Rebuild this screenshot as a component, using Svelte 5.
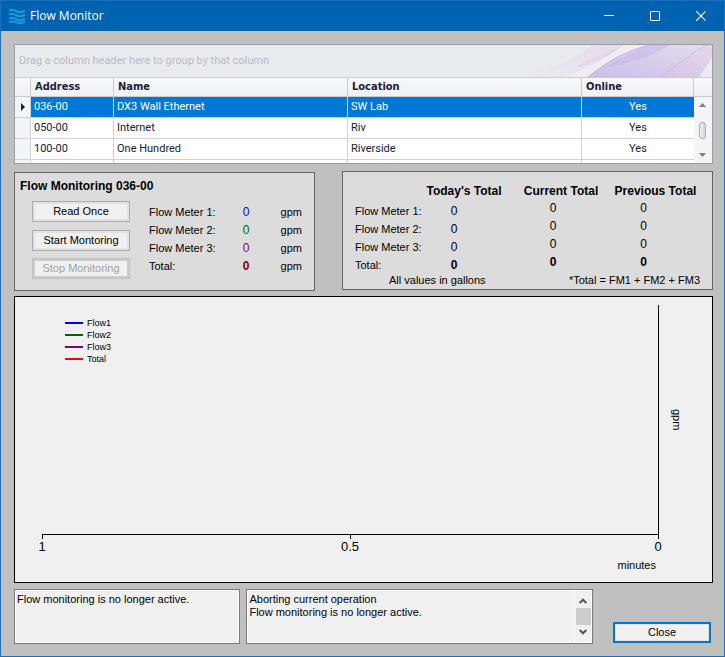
<script>
  const devices = [
    { address: '036-00', name: 'DX3 Wall Ethernet', location: 'SW Lab', online: 'Yes' },
    { address: '050-00', name: 'Internet', location: 'Riv', online: 'Yes' },
    { address: '100-00', name: 'One Hundred', location: 'Riverside', online: 'Yes' }
  ];
  let selected = $state(0);

  const meters = [
    { label: 'Flow Meter 1:', value: 0, tone: 'blue' },
    { label: 'Flow Meter 2:', value: 0, tone: 'green' },
    { label: 'Flow Meter 3:', value: 0, tone: 'plum' },
    { label: 'Total:', value: 0, tone: 'total' }
  ];
  const totals = [
    { label: 'Flow Meter 1:', today: 0, current: 0, previous: 0 },
    { label: 'Flow Meter 2:', today: 0, current: 0, previous: 0 },
    { label: 'Flow Meter 3:', today: 0, current: 0, previous: 0 },
    { label: 'Total:', today: 0, current: 0, previous: 0 }
  ];
  const series = [
    { name: 'Flow1', tone: 's1' },
    { name: 'Flow2', tone: 's2' },
    { name: 'Flow3', tone: 's3' },
    { name: 'Total', tone: 's4' }
  ];
  const status = 'Flow monitoring is no longer active.';
  const log = 'Aborting current operation\nFlow monitoring is no longer active.';
</script>

<div class="window">
  <header class="titlebar">
    <svg class="logo" width="16" height="15" viewBox="0 0 16 15" aria-hidden="true">
      <g fill="none" stroke="#1b9bdc" stroke-width="2">
        <path d="M0 1.5C3 .5 5 1 8 2.500S13 3.500 16 1.500" />
        <path d="M0 5.500C3 4.500 5 5 8 6.500S13 7.500 16 5.500" />
        <path d="M0 9.500C3 8.500 5 9 8 10.500S13 11.500 16 9.500" />
        <path d="M0 13C3 12 5 12.500 8 13.500S13 14.500 16 12.500" />
      </g>
    </svg>
    <h1>Flow Monitor</h1>
    <button class="ctl" aria-label="Minimize">
      <svg width="10" height="10" viewBox="0 0 10 10"><path d="M0 4.500H10" stroke="#fff" /></svg>
    </button>
    <button class="ctl" aria-label="Maximize">
      <svg width="10" height="10" viewBox="0 0 10 10"><path d="M.5 .5H9.500V9.500H.5Z" fill="none" stroke="#fff" /></svg>
    </button>
    <button class="ctl" aria-label="Close window">
      <svg width="10" height="10" viewBox="0 0 10 10"><path d="M0 0L10 10M10 0L0 10" stroke="#fff" stroke-width="1.200" /></svg>
    </button>
  </header>

  <main>
    <section class="grid">
      <div class="groupbar">
        <span>Drag a column header here to group by that column</span>
        <svg class="swirl" width="200" height="32" viewBox="0 0 200 32" aria-hidden="true">
          <defs>
            <linearGradient id="pink" x1="0" x2="1" y1="1" y2="0">
              <stop offset="0" stop-color="#e9eaee" />
              <stop offset=".5" stop-color="#e8deec" />
              <stop offset="1" stop-color="#e6d3ea" />
            </linearGradient>
            <linearGradient id="violet" x1="0" x2="1" y1="1" y2="0">
              <stop offset="0" stop-color="#cdbdea" />
              <stop offset=".4" stop-color="#d4caea" />
              <stop offset="1" stop-color="#e4dcee" />
            </linearGradient>
            <linearGradient id="edge" x1="0" x2="1" y1="1" y2="0">
              <stop offset="0" stop-color="#d6c2e5" />
              <stop offset="1" stop-color="#e3d8ec" />
            </linearGradient>
          </defs>
          <path d="M53 32Q85 20 112 0H200V32Z" fill="#eeeef1" />
          <path d="M0 32Q50 24 80 0H112Q85 20 53 32Z" fill="url(#pink)" opacity=".6" />
          <path d="M62 23Q85 10 112 0Q90 17 62 23Z" fill="#e5cfe8" opacity=".7" />
          <path d="M76 32Q103 9 137 0H200V32Z" fill="url(#violet)" />
          <path d="M92 23Q118 8 137 0H158Q132 16 92 23Z" fill="#c5b3e6" opacity=".5" />
          <path d="M76 32Q103 9 137 0" fill="none" stroke="#c2b2e2" />
          <path d="M147 32Q165 20 180 9T200 0V12Q190 25 185 32Z" fill="url(#edge)" />
          <path d="M147 32Q165 20 180 9T200 0" fill="none" stroke="#d2bfe0" />
          <path d="M187 32Q193 24 200 12V32Z" fill="#ecebf0" />
        </svg>
      </div>
      <div class="gridbody">
        <table>
          <colgroup><col class="c0" /><col class="c1" /><col class="c2" /><col class="c2" /><col class="c4" /></colgroup>
          <thead>
            <tr><th aria-label="Row marker"></th><th>Address</th><th>Name</th><th>Location</th><th>Online</th></tr>
          </thead>
          <tbody>
            {#each devices as d, i}
              <tr class:selected={i === selected} onclick={() => (selected = i)}>
                <td class="marker">
                  {#if i === selected}
                    <svg width="4" height="8" viewBox="0 0 4 8" aria-hidden="true"><path d="M0 0L4 4L0 8Z" fill="#20202c" /></svg>
                  {/if}
                </td>
                <td>{d.address}</td><td>{d.name}</td><td>{d.location}</td><td class="yes">{d.online}</td>
              </tr>
            {/each}
            <tr><td class="marker"></td><td></td><td></td><td></td><td></td></tr>
          </tbody>
        </table>
        <div class="side">
          <div class="cap"></div>
          <div class="scroll">
            <svg width="7" height="4" viewBox="0 0 7 4" aria-hidden="true"><path d="M0 4L3.500 0L7 4Z" fill="#7d7f8e" /></svg>
            <div class="thumb"></div>
            <svg width="7" height="4" viewBox="0 0 7 4" aria-hidden="true"><path d="M0 0L3.500 4L7 0Z" fill="#7d7f8e" /></svg>
          </div>
        </div>
      </div>
    </section>

    <div class="panels">
      <section class="panel live">
        <h2>Flow Monitoring 036-00</h2>
        <div class="liverow">
          <div class="buttons">
            <button class="btn">Read Once</button>
            <button class="btn">Start Montoring</button>
            <button class="btn" disabled>Stop Monitoring</button>
          </div>
          <dl>
            {#each meters as m}
              <div><dt>{m.label}</dt><dd class={m.tone}>{m.value}</dd><dd class="unit">gpm</dd></div>
            {/each}
          </dl>
        </div>
      </section>

      <section class="panel totals">
        <table>
          <colgroup><col class="t0" /><col class="t1" /><col class="t2" /><col /></colgroup>
          <thead>
            <tr><th class="lead" aria-label="Meter"></th><th>Today's Total</th><th>Current Total</th><th>Previous Total</th></tr>
          </thead>
          <tbody>
            {#each totals as t, i}
              <tr class:sum={i === 3}>
                <td class="lead">{t.label}</td><td class="today">{t.today}</td><td class="current">{t.current}</td><td class="previous">{t.previous}</td>
              </tr>
            {/each}
          </tbody>
        </table>
        <footer><span>All values in gallons</span><span>*Total = FM1 + FM2 + FM3</span></footer>
      </section>
    </div>

    <section class="chart" aria-label="Flow chart">
      <div class="plotcol">
        <div class="plot">
          <ul>
            {#each series as s}
              <li><i class={s.tone}></i>{s.name}</li>
            {/each}
          </ul>
        </div>
        <div class="ticks"><span>1</span><span>0.5</span><span>0</span></div>
        <div class="xlabel">minutes</div>
      </div>
      <div class="ylabel"><span>gpm</span></div>
    </section>

    <div class="bottom">
      <div class="box status"><textarea readonly aria-label="Status" value={status}></textarea></div>
      <div class="box log">
        <textarea readonly aria-label="Log" value={log}></textarea>
        <div class="bar">
          <svg width="8" height="6" viewBox="0 0 8 6" aria-hidden="true"><path d="M.7 5L4 1.700L7.300 5" fill="none" stroke="#555" stroke-width="2" /></svg>
          <div class="barthumb"></div>
          <svg width="8" height="6" viewBox="0 0 8 6" aria-hidden="true"><path d="M.7 1L4 4.300L7.300 1" fill="none" stroke="#555" stroke-width="2" /></svg>
        </div>
      </div>
      <button class="btn close">Close</button>
    </div>
  </main>
</div>

<style>
  :global(body) { margin: 0; background: #c0c0c0; }
  .window, .window * { box-sizing: border-box; }
  .window {
    min-height: 100vh;
    border: 1px solid #1a70bb;
    background: #c0c0c0;
    color: #000;
    font: 11px/13px "Liberation Sans", Arial, sans-serif;
  }
  button { font: inherit; color: inherit; margin: 0; padding: 0; }
  h1, h2, dl, dd, ul { margin: 0; padding: 0; }
  svg { display: block; }

  .titlebar { display: flex; align-items: center; height: 30px; background: #0063b1; padding-left: 8px; }
  h1 { flex: 1; margin-left: 5px; color: #fff; font: 12px/16px "Open Sans", "Noto Sans", sans-serif; }
  .ctl { width: 46px; height: 30px; border: 0; background: none; display: flex; align-items: center; justify-content: center; }

  main { padding: 13px 11px 12px 13px; }

  .grid {
    height: 120px;
    overflow: hidden;
    border: 1px solid #9a9da8;
    background: #fff;
    color: #20203a;
    font: 11px/14px Roboto, "Noto Sans", sans-serif;
  }
  .groupbar { display: flex; align-items: center; justify-content: space-between; height: 33px; padding-left: 4px; background: #e9eaee; border-bottom: 1px solid #c9cbd3; color: #babbc9; white-space: nowrap; }
  .gridbody { display: flex; }
  .grid table { flex: 1; table-layout: fixed; border-collapse: separate; border-spacing: 0; width: 100%; }
  .c0 { width: 16px; }
  .c1 { width: 83px; }
  .c2 { width: 234px; }
  .grid th { height: 19px; padding: 0 4px; text-align: left; font-family: "DejaVu Sans Condensed", "Noto Sans", sans-serif; font-weight: bold; background: linear-gradient(#f8f8f9, #f0f1f3); border-right: 1px solid #c9cbd3; border-bottom: 1px solid #c9cbd3; }
  .grid td { height: 21px; padding: 0 3px; border-right: 1px solid #d0d2d8; border-bottom: 1px solid #d0d2d8; white-space: nowrap; }
  .grid td:last-child { border-right: 0; }
  .grid td.marker { background: #f4f5f7; padding: 0 0 0 6px; }
  .grid td.yes { text-align: center; }
  .selected td:not(.marker) { background: #0078d7; color: #fff; }
  .side { width: 18px; display: flex; flex-direction: column; }
  .cap { height: 19px; background: linear-gradient(#f8f8f9, #f0f1f3); border-bottom: 1px solid #c9cbd3; }
  .scroll { height: 66px; padding: 6px 2px 6px 0; display: flex; flex-direction: column; align-items: center; justify-content: space-between; background: #f5f5f8; }
  .thumb { width: 7px; height: 17px; border: 1px solid #a9abb6; border-radius: 3px; background: linear-gradient(90deg, #f0f0f3, #d5d6dc); }

  .panels { display: grid; grid-template-columns: 301fr 371fr; gap: 27px; margin-top: 7px; }
  .panel { background: #dcdcdc; border: 1px solid #646464; }
  .live { margin-top: 1px; height: 119px; padding: 6px 12px 0 5px; }
  .totals { height: 119px; margin-bottom: 1px; padding: 12px 12px 0 12px; }
  h2 { font: bold 12px/14px "Liberation Sans", Arial, sans-serif; }
  .liverow { display: flex; gap: 19px; padding: 8px 0 0 12px; }
  .buttons { display: flex; flex-direction: column; gap: 7px; }
  .btn { width: 98px; height: 21px; border: 1px solid #adadad; background: #f0f0f0; box-shadow: inset 0 0 0 2px #e1e1e1; }
  .buttons .btn:nth-child(2) { margin-top: 1px; }
  .btn:disabled { color: #a0a0a0; border-color: #bfbfbf; box-shadow: inset 0 0 0 2px #cccccc; }
  dl { flex: 1; padding-top: 2px; }
  dl div { display: flex; height: 18px; line-height: 18px; }
  dt { flex: 1; }
  dd { width: 12px; text-align: center; font-size: 12px; }
  dd.unit { width: 50px; text-align: right; font-size: 11px; }
  .blue { color: #0000ff; }
  .green { color: #006400; }
  .plum { color: #800080; }
  .total { color: #8b0000; font-weight: bold; }

  .totals table { width: 100%; border-collapse: collapse; table-layout: fixed; }
  .t0 { width: 62px; }
  .t1 { width: 94px; }
  .t2 { width: 100px; }
  .totals th, .totals td { padding: 0; height: 18px; text-align: center; line-height: 14px; font-size: 12px; vertical-align: top; white-space: nowrap; }
  .totals th { height: 17px; }
  .totals .lead { text-align: left; font-size: 11px; padding: 3px 0 0; }
  .totals td.today { padding: 3px 20px 0 0; }
  .totals td.current { padding-right: 16px; }
  .totals td.previous { padding-right: 24px; }
  .sum td:not(.lead) { font-weight: bold; }
  footer { display: flex; justify-content: space-between; padding: 1px 0 0 34px; }

  .chart { display: flex; height: 287px; margin-top: 5px; border: 1px solid #000; background: #f0f0f0; padding: 8px 29px 0 27px; }
  .plotcol { flex: 1; }
  .plot { height: 230px; border-right: 1px solid #000; border-bottom: 1px solid #000; padding: 12px 0 0 23px; }
  ul { list-style: none; font-size: 9px; line-height: 12px; }
  li { display: flex; align-items: center; gap: 4px; }
  i { width: 18px; height: 2px; }
  .s1 { background: #0000ff; }
  .s2 { background: #006400; }
  .s3 { background: #800080; }
  .s4 { background: #ff0000; }
  .ticks { display: flex; justify-content: space-between; margin: 0 -14px 0 -15px; font-size: 13px; line-height: 16px; }
  .ticks span { width: 30px; text-align: center; }
  .ticks span::before { content: ""; display: block; width: 1px; height: 4px; margin: 0 auto; background: #000; }
  .xlabel { text-align: right; padding: 4px 3px 0 0; }
  .ylabel { width: 24px; height: 230px; display: flex; align-items: center; justify-content: flex-end; }
  .ylabel span { writing-mode: vertical-rl; }

  .bottom { display: flex; align-items: flex-end; gap: 6px; margin-top: 6px; padding-right: 2px; }
  .box { display: flex; height: 55px; border: 1px solid #7a7a7a; background: #f0f0f0; box-shadow: inset 0 0 0 1px #fff; }
  .status { flex: 226 1 0; }
  .log { flex: 347 1 0; }
  textarea { flex: 1; min-width: 0; resize: none; border: 0; outline: 0; margin: 0; padding: 3px 2px; background: none; font: inherit; color: inherit; overflow: hidden; }
  .bar { width: 17px; margin: 1px; padding: 7px 0; border-left: 1px solid #fff; display: flex; flex-direction: column; align-items: center; justify-content: space-between; }
  .barthumb { width: 15px; height: 17px; background: #cdcdcd; }
  .close { margin: 0 0 1px 14px; border: 2px solid #0078d7; box-shadow: inset 0 0 0 1px #e1e1e1; }
</style>
